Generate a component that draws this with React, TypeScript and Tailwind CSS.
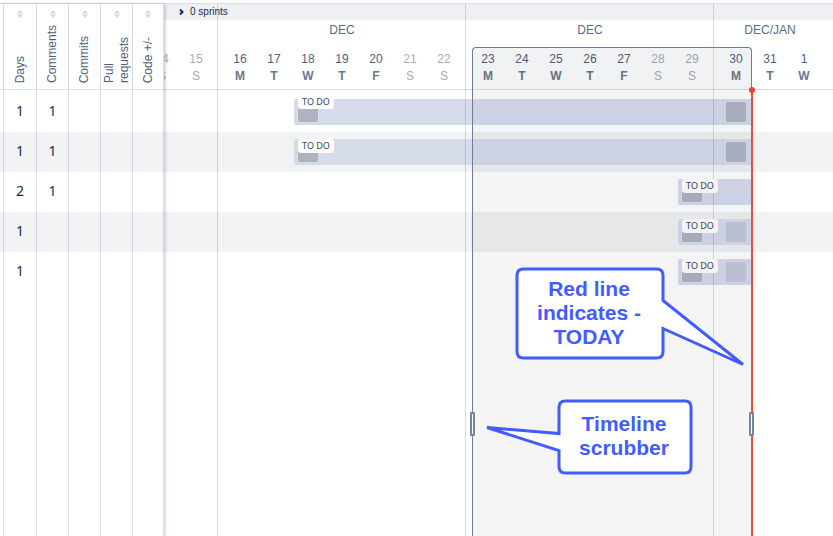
import React from "react";

const columns = [
  { label: "Days", width: "w-[33px]" },
  { label: "Comments", width: "w-8" },
  { label: "Commits", width: "w-8" },
  { label: "Pull requests", width: "w-8" },
  { label: "Code +/-", width: "w-[31px]" },
];

type Row = {
  days: string;
  comments: string;
  bar: string;
  badge: string;
  end: string | null;
};

const longBar = "ml-[130px] w-[457px] bg-[linear-gradient(to_right,#d5dbe8_178px,#d6dcef_178px)]";
const shortBar = "ml-[514px] w-[73px] bg-[#d6dcef]";

const rows: Row[] = [
  { days: "1", comments: "1", bar: longBar, badge: "-top-1", end: "bg-[#b1b6c5]" },
  { days: "1", comments: "1", bar: longBar, badge: "top-0", end: "bg-[#b1b6c5]" },
  { days: "2", comments: "1", bar: shortBar, badge: "top-0", end: null },
  { days: "1", comments: "", bar: shortBar, badge: "top-0", end: "bg-[#c3c7da]" },
  { days: "1", comments: "", bar: shortBar, badge: "top-0", end: "bg-[#c3c7da]" },
];

type Day = [string, string];

const weeks: { month: string; width: string; days: Day[] }[] = [
  { month: "", width: "w-[53px]", days: [["14", "S"], ["15", "S"]] },
  {
    month: "DEC",
    width: "w-[248px]",
    days: [["16", "M"], ["17", "T"], ["18", "W"], ["19", "T"], ["20", "F"], ["21", "S"], ["22", "S"]],
  },
  {
    month: "DEC",
    width: "w-[248px]",
    days: [["23", "M"], ["24", "T"], ["25", "W"], ["26", "T"], ["27", "F"], ["28", "S"], ["29", "S"]],
  },
  { month: "DEC/JAN", width: "w-[112px]", days: [["30", "M"], ["31", "T"], ["1", "W"]] },
];

function SortIcon() {
  return (
    <svg width="6" height="8" viewBox="0 0 6 8" fill="#d3d7de" aria-hidden="true">
      <path d="M3 0 6 3.500H0zM3 8 0 4.500h6z" />
    </svg>
  );
}

function MetricsTable() {
  return (
    <table className="relative z-40 h-full w-[164px] shrink-0 table-fixed border-separate border-spacing-0 shadow-[1px_0_3px_rgba(60,70,130,0.3)]">
      <thead>
        <tr className="h-[86px]">
          <td className="w-1 border-r border-b border-[#091e42]/14" />
          {columns.map((c) => (
            <th
              key={c.label}
              scope="col"
              className={`${c.width} h-[86px] border-r border-b border-[#091e42]/14 bg-white p-0 font-normal shadow-[0_2px_3px_rgba(60,70,130,0.12)]`}
            >
              <div className="flex h-[85px] flex-col items-center justify-between pt-[6px] pb-[6px]">
                <button aria-label={`Sort by ${c.label}`}>
                  <SortIcon />
                </button>
                <span className="max-h-[60px] rotate-180 text-left text-[12px] leading-[15px] text-[#505f79] [writing-mode:vertical-rl]">
                  {c.label}
                </span>
              </div>
            </th>
          ))}
        </tr>
      </thead>
      <tbody>
        {rows.map((r, i) => {
          const size = i === 0 ? "h-[42px] pt-[2px]" : "h-10 pt-0";
          const tone = i % 2 ? "bg-[#f0f2f4]" : "bg-white";
          const cell = `${size} ${tone} border-r border-[#091e42]/14 px-0 pb-[2px] text-center font-['Noto_Sans',sans-serif] text-[14px] leading-5 text-[#172b4d]`;
          return (
            <tr key={i}>
              <td className={cell} />
              <td className={cell}>{r.days}</td>
              <td className={cell}>{r.comments}</td>
              <td className={cell} />
              <td className={cell} />
              <td className={cell} />
            </tr>
          );
        })}
        <tr className="h-full">
          {[0, 1, 2, 3, 4, 5].map((i) => (
            <td key={i} className="border-r border-[#091e42]/14 bg-white p-0" />
          ))}
        </tr>
      </tbody>
    </table>
  );
}

function CalendarHeader() {
  return (
    <header className="h-[86px] border-b border-[#dcdfe4]">
      <div className="h-4 bg-[#eff0f4] pl-[15px]">
        <button className="flex h-4 items-center gap-[5px] text-[10px] leading-4 text-[#172b4d]">
          <svg width="6" height="8" viewBox="0 0 6 8" fill="none" stroke="#172b4d" strokeWidth="2" aria-hidden="true">
            <path d="M1 1.500l2.500 2.500-2.500 2.500" />
          </svg>
          0 sprints
        </button>
      </div>
      <div className="flex">
        {weeks.map((w, i) => (
          <div key={i} className={`${w.width} shrink-0 overflow-hidden text-center text-[12px] text-[#5e6c84]`}>
            <div className="h-[31px] pt-[2px] pl-[2px] leading-4">{w.month}</div>
            <div className="flex justify-end pr-1">
              {w.days.map(([n, d]) => (
                <div key={n} className={`w-[34px] shrink-0 leading-[17px] ${d === "S" ? "text-[#a5adba]" : "text-[#505f79]"}`}>
                  <div>{n}</div>
                  <div className={d === "S" ? "" : "font-bold text-[#6b778c]"}>{d}</div>
                </div>
              ))}
            </div>
          </div>
        ))}
      </div>
    </header>
  );
}

function Lane({ row, index }: { row: Row; index: number }) {
  return (
    <li className={`flex h-10 items-center ${index % 2 ? "bg-[#f0f2f4]" : "bg-white"}`}>
      <div className={`${row.bar} relative flex h-[26px] shrink-0 items-center justify-between rounded-l-[2px] pr-[5px] pl-1`}>
        <span className="size-5 rounded-[2px] bg-[#afb3c0]" />
        {row.end && <span className={`size-5 rounded-[2px] ${row.end}`} />}
        <span className={`absolute left-1 z-20 h-[14px] w-9 rounded-[3px] bg-white text-center font-['Noto_Sans',sans-serif] text-[9px] leading-[14px] text-[#344563] ${row.badge}`}>
          TO DO
        </span>
      </div>
    </li>
  );
}

function Scrubber() {
  const handle = "absolute top-[364px] h-6 w-[5px] rounded-[1px] border-2 border-[#76859c] bg-white";
  return (
    <div className="absolute top-[43px] bottom-0 left-[308px] z-30 w-[280px] rounded-t-[4px] border-x border-t border-[#6b7c9c]">
      <div className="h-[42px] rounded-t-[3px] bg-[#091e42]/6" />
      <div className="absolute top-[42px] bottom-0 w-full bg-black/[0.043]" />
      <div className="absolute top-[42px] -right-[2px] bottom-0 w-px bg-[#ef4a35]" />
      <div className="absolute top-[39px] -right-1 size-[6px] rounded-full bg-[#e5432f]" />
      <button aria-label="Range start" className={`${handle} -left-[3px]`} />
      <button aria-label="Range end" className={`${handle} -right-[3px]`} />
    </div>
  );
}

function Callouts() {
  const text = "absolute text-center text-[21px] leading-6 font-bold text-[#435cff]";
  return (
    <div className="absolute top-[264px] left-[320px] z-40 h-[212px] w-[264px]">
      <svg width="264" height="212" viewBox="484 268 264 212" fill="#fff" stroke="#435cff" strokeWidth="3" className="absolute" overflow="visible" aria-hidden="true">
        <path d="M523.5 269H656.5Q663 269 663 275.500V300.500L743 364.500L663 328.500V351.500Q663 358 656.500 358H523.500Q517 358 517 351.500V275.500Q517 269 523.500 269Z" />
        <path d="M565.500 401H685Q691 401 691 407.500V466.500Q691 473 685 473H565.500Q559 473 559 466.500V450.500L487 427.500L559 433.500V407.500Q559 401 565.500 401Z" />
      </svg>
      <p className={`${text} top-[9px] left-8 w-[146px]`}>
        Red line
        <br />
        indicates -
        <br />
        TODAY
      </p>
      <p className={`${text} top-[144px] left-[74px] w-[132px]`}>
        Timeline
        <br />
        scrubber
      </p>
    </div>
  );
}

export default function App() {
  return (
    <main className="h-screen overflow-hidden bg-white pt-[3px] font-['Liberation_Sans',Arial,sans-serif]">
      <div className="flex h-full border-t border-[#dcdfe4]">
        <MetricsTable />
        <section className="relative min-w-0 flex-1 overflow-hidden" aria-label="Timeline">
          <CalendarHeader />
          <ul className="pt-[2px]">
            {rows.map((r, i) => (
              <Lane key={i} row={r} index={i} />
            ))}
          </ul>
          <div className="pointer-events-none absolute inset-y-0 left-[53px] z-10 flex">
            <div className="w-[248px] border-l border-black/14" />
            <div className="w-[248px] border-l border-black/14" />
            <div className="border-l border-black/14" />
          </div>
          <Scrubber />
          <Callouts />
        </section>
      </div>
    </main>
  );
}
